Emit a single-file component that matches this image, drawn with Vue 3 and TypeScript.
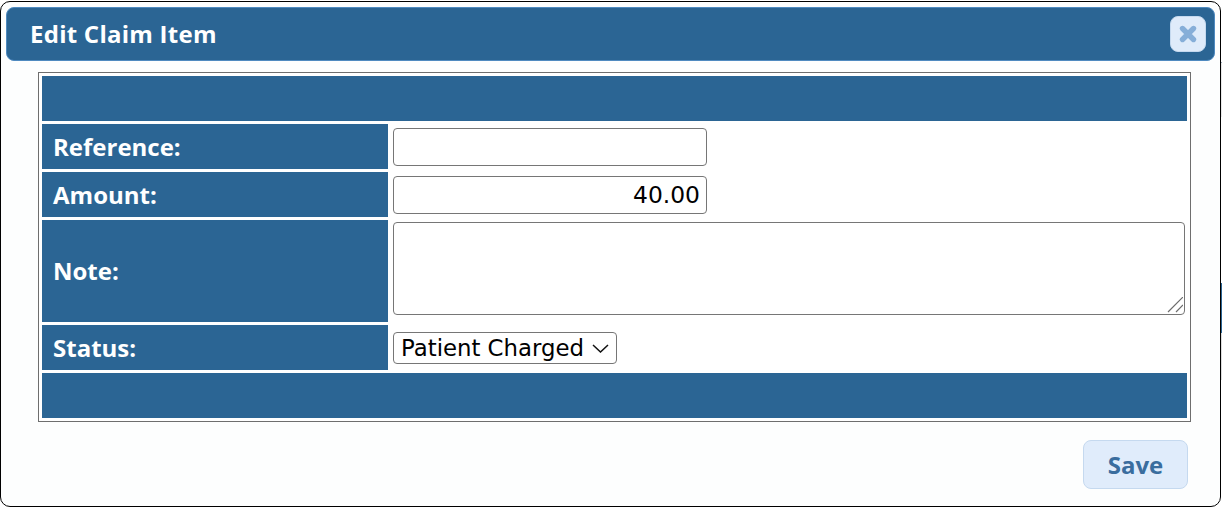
<script setup lang="ts">
import { ref } from 'vue'

const reference = ref('')
const amount = ref('40.00')
const note = ref('')
const status = ref('Patient Charged')
</script>

<template>
  <div class="backdrop">
    <section class="dialog">
      <header class="titlebar">
        <h1 class="title">Edit Claim Item</h1>
        <button class="close" type="button" aria-label="Close">
          <svg viewBox="0 0 20 20" width="20" height="20" aria-hidden="true">
            <path d="M4.5 4.5 15.5 15.5M15.5 4.5 4.5 15.5" stroke="#86aed8" stroke-width="5.4" stroke-linecap="round" fill="none" />
          </svg>
        </button>
      </header>
      <div class="content">
        <table class="form">
          <colgroup>
            <col class="col-label" />
            <col />
          </colgroup>
          <tbody>
            <tr><td class="band" colspan="2"></td></tr>
            <tr>
              <th>Reference:</th>
              <td class="field"><input v-model="reference" class="input" type="text" /></td>
            </tr>
            <tr>
              <th>Amount:</th>
              <td class="field"><input v-model="amount" class="input amount" type="text" /></td>
            </tr>
            <tr>
              <th class="tall">Note:</th>
              <td class="field top">
                <span class="note-wrap">
                  <textarea v-model="note" class="note"></textarea>
                  <svg class="grip" viewBox="0 0 16 16" width="16" height="16" aria-hidden="true">
                    <path d="M1 15 16 0M9 15 16 8" stroke="#6e6e6e" stroke-width="1.2" fill="none" />
                  </svg>
                </span>
              </td>
            </tr>
            <tr>
              <th>Status:</th>
              <td class="field">
                <span class="select-wrap">
                  <select v-model="status" class="select">
                    <option>Patient Charged</option>
                  </select>
                  <svg class="chevron" viewBox="0 0 17 9" width="17" height="9" aria-hidden="true">
                    <path d="M1 1 8.5 8 16 1" stroke="#111" stroke-width="1.5" fill="none" />
                  </svg>
                </span>
              </td>
            </tr>
            <tr><td class="band" colspan="2"></td></tr>
          </tbody>
        </table>
      </div>
      <footer class="actions">
        <button class="save" type="button">Save</button>
      </footer>
    </section>
    <div class="page-edge" aria-hidden="true">
      <span class="edge-white-a"></span>
      <span class="edge-grey-a"></span>
      <span class="edge-white-b"></span>
      <span class="edge-blue"></span>
      <span class="edge-grey-b"></span>
      <span class="edge-white-c"></span>
    </div>
  </div>
</template>

<style>
html, body { margin: 0; background: #fff; }
</style>

<style scoped>
.backdrop {
  width: 1222px;
  height: 508px;
  display: flex;
  align-items: flex-start;
  font-family: "Open Sans", "Noto Sans", sans-serif;
}
.dialog {
  flex: none;
  width: 1221px;
  height: 506px;
  margin-top: 1px;
  box-sizing: border-box;
  border: 1px solid #000;
  border-radius: 10px;
  background: #fdfefe;
  padding: 5px;
  overflow: hidden;
}
.page-edge {
  flex: 1;
  height: 508px;
  display: flex;
  flex-direction: column;
}
.edge-white-a { height: 62px; background: #fff; }
.edge-grey-a { height: 55px; background: #e9e9e9; border-top: 1px solid #9aa7b5; box-sizing: border-box; }
.edge-white-b { height: 166px; background: #fff; }
.edge-blue { height: 50px; background: #2b6594; }
.edge-grey-b { height: 47px; background: #dcdcdc; }
.edge-white-c { flex: 1; background: #fff; }
.titlebar {
  height: 54px;
  box-sizing: border-box;
  background: #2b6594;
  border: 1px solid #4f8ac0;
  border-radius: 8px;
  display: flex;
  align-items: center;
  justify-content: space-between;
  padding: 0 8px 0 23px;
}
.title {
  margin: 0 0 2px;
  color: #fff;
  font-size: 24px;
  font-weight: 700;
  letter-spacing: 0.25px;
}
.close {
  width: 36px;
  height: 36px;
  border: 1px solid #c5d9ef;
  border-radius: 8px;
  background: #dfebfa;
  padding: 0;
  display: flex;
  align-items: center;
  justify-content: center;
}
.content {
  padding: 11px 0 0 32px;
}
.form {
  width: 1153px;
  box-sizing: border-box;
  border: 1px solid #6e6e6e;
  border-collapse: separate;
  border-spacing: 3px;
  table-layout: fixed;
  background: #fff;
}
.col-label { width: 346px; }
.form th, .form td { padding: 0; }
.band { height: 45px; background: #2b6594; }
.form th {
  box-sizing: border-box;
  background: #2b6594;
  color: #fff;
  font-size: 24px;
  line-height: 30px;
  font-weight: 700;
  text-align: left;
  padding-left: 11px;
  height: 45px;
}
.form th.tall { height: 102px; }
.form .field { padding: 0 2px; vertical-align: middle; }
.form .field.top { vertical-align: top; padding-top: 2px; }
.input {
  display: block;
  width: 314px;
  height: 38px;
  box-sizing: border-box;
  border: 1px solid #767676;
  border-radius: 4px;
  background: #fff;
  font: 23.4px "DejaVu Sans", sans-serif;
  color: #000;
  padding: 0 6px;
}
.amount { text-align: right; }
.note-wrap {
  position: relative;
  display: block;
  width: 792px;
  height: 93px;
}
.note {
  display: block;
  width: 100%;
  height: 100%;
  box-sizing: border-box;
  border: 1px solid #767676;
  border-radius: 4px;
  background: #fff;
  margin: 0;
  padding: 2px;
  resize: none;
}
.grip {
  position: absolute;
  right: 2px;
  bottom: 2px;
  pointer-events: none;
}
.select-wrap {
  position: relative;
  display: block;
  width: 224px;
  height: 32px;
}
.select {
  appearance: none;
  display: block;
  width: 100%;
  height: 100%;
  box-sizing: border-box;
  border: 1px solid #767676;
  border-radius: 4px;
  background: #fff;
  color: #000;
  font: 22.8px "DejaVu Sans", sans-serif;
  padding: 0 7px;
}
.chevron {
  position: absolute;
  right: 8px;
  top: 12px;
  pointer-events: none;
}
.actions {
  display: flex;
  justify-content: flex-end;
  padding: 18px 27px 0 0;
}
.save {
  width: 105px;
  height: 49px;
  border: 1px solid #c5d9ef;
  border-radius: 8px;
  background: #e0ecfb;
  color: #3a6d9e;
  font: 700 24px "Open Sans", "Noto Sans", sans-serif;
  padding: 0;
}
</style>
